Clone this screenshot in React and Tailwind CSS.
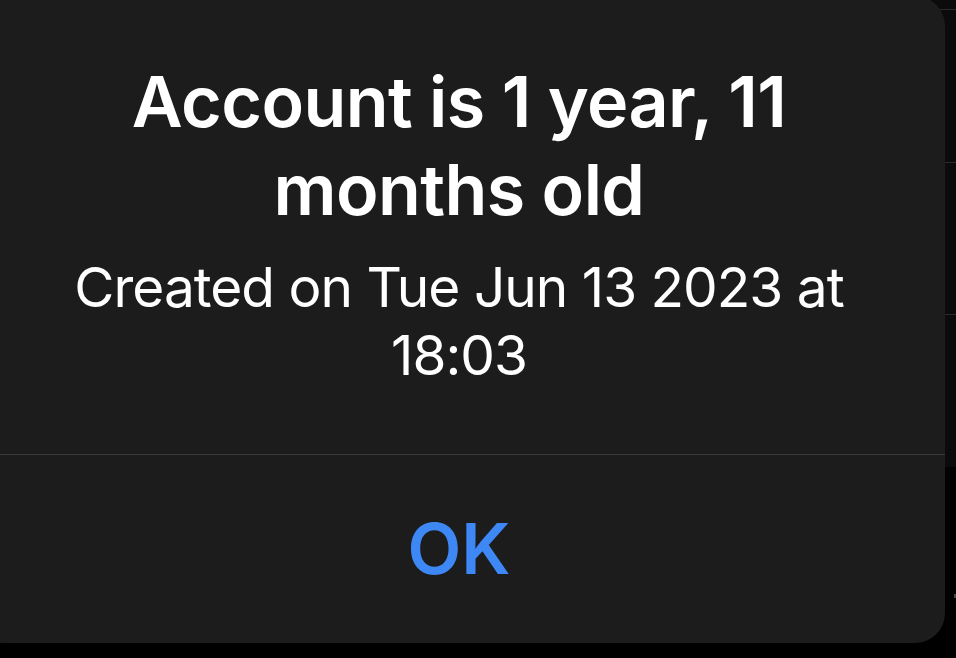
export default function App() {
  return (
    <div className="relative w-[956px] h-[658px] overflow-hidden bg-black" style={{ fontFamily: 'Inter, "Noto Sans", sans-serif' }}>
      {/* background list behind the alert */}
      <div className="flex flex-col">
        <div className="h-[467px] bg-[#0b0b0b] flex flex-col">
          <div className="h-[9px]" />
          <div className="h-px bg-[#2b2b2b]" />
          <div className="h-[152px]" />
          <div className="h-px bg-[#2b2b2b]" />
          <div className="h-[151px]" />
          <div className="h-px bg-[#2b2b2b]" />
        </div>
        <div className="h-[127px]" />
        <div className="flex justify-end gap-[8px] pr-[0px]">
          <div className="w-[2px] h-[4px] bg-[#444]" />
        </div>
      </div>

      {/* alert */}
      <div className="absolute left-[-27px] top-[-4px] w-[972px] h-[647px] rounded-[30px] bg-[#1c1c1c] flex flex-col text-white">
        <div className="flex flex-col items-center pt-[62px] px-[80px] text-center">
          <div className="text-[70px] leading-[88px] font-semibold tracking-[-0.6px]">
            Account is 1 year, 11<br />months old
          </div>
          <div className="mt-[19px] text-[55px] leading-[68px] font-normal tracking-[-1px]">
            Created on Tue Jun 13 2023 at<br />18:03
          </div>
        </div>
        <div className="mt-[65px] h-px bg-[#3a3a3a]" />
        <div className="flex-1 flex items-center justify-center">
          <span className="text-[70px] leading-none font-semibold text-[#3e88f6]">OK</span>
        </div>
      </div>
    </div>
  );
}
